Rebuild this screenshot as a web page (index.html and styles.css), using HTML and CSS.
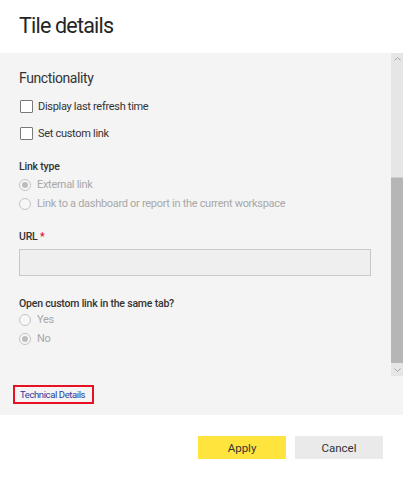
FILE: index.html
```html
<!DOCTYPE html>
<html>
<head>
<meta charset="utf-8">
<link rel="stylesheet" href="styles.css">
</head>
<body>
<div class="dialog">
  <header class="head"><h1 class="title">Tile details</h1></header>
  <section class="panel">
    <div class="scrollrow">
      <div class="content">
        <h2 class="section">Functionality</h2>
        <label class="check"><span class="box"></span>Display last refresh time</label>
        <label class="check check2"><span class="box"></span>Set custom link</label>
        <div class="label lt">Link type</div>
        <div class="radio dis"><span class="circ on"></span>External link</div>
        <div class="radio dis"><span class="circ"></span>Link to a dashboard or report in the current workspace</div>
        <div class="label url">URL <span class="req">*</span></div>
        <div class="input"></div>
        <div class="label otab">Open custom link in the same tab?</div>
        <div class="radio dis"><span class="circ"></span>Yes</div>
        <div class="radio dis"><span class="circ on"></span>No</div>
      </div>
      <div class="scrollbar">
        <div class="arrow up"><svg width="7" height="4" viewBox="0 0 7 4"><path d="M0.5 3.5 L3.5 0.5 L6.5 3.5" fill="none" stroke="#a8a8a8" stroke-width="1"/></svg></div>
        <div class="track"><div class="thumb"></div></div>
        <div class="arrow down"><svg width="7" height="4" viewBox="0 0 7 4"><path d="M0.5 0.5 L3.5 3.5 L6.5 0.5" fill="none" stroke="#a8a8a8" stroke-width="1"/></svg></div>
      </div>
    </div>
    <div class="techrow"><a class="tech">Technical Details</a></div>
  </section>
  <footer class="foot">
    <button class="btn apply">Apply</button>
    <button class="btn cancel">Cancel</button>
  </footer>
</div>
</body>
</html>
```
FILE: styles.css
```css
* { box-sizing: border-box; }
html, body { margin: 0; padding: 0; background: #fff; }
body { font-family: Roboto, "Open Sans", sans-serif; color: #333; width: 403px; height: 485px; overflow: hidden; }
.dialog { display: flex; flex-direction: column; height: 485px; }
.head { height: 53px; padding-left: 19px; }
.title { margin: 0; padding-top: 11px; font-size: 21.5px; font-weight: 400; line-height: 30px; color: #252525; letter-spacing: -0.8px; }
.panel { background: #f4f4f4; height: 362px; display: flex; flex-direction: column; }
.scrollrow { display: flex; height: 323px; }
.content { flex: 1; padding-left: 19px; padding-top: 15px; }
.section { margin: 0; font-size: 14px; font-weight: 400; line-height: 20px; color: #333; letter-spacing: -0.4px; }
.check { display: flex; align-items: center; height: 20px; margin-top: 8px; font-size: 11px; color: #333; letter-spacing: -0.3px; }
.check2 { margin-top: 7px; }
.box { width: 13px; height: 13px; border: 1px solid #7a7a7a; background: #fff; margin-left: 1px; margin-right: 5px; border-radius: 1px; }
.label { font-size: 10.5px; font-weight: 500; line-height: 16px; color: #333; letter-spacing: -0.2px; }
.lt { margin-top: 16px; }
.radio { display: flex; align-items: center; height: 19px; font-size: 11px; letter-spacing: -0.3px; }
.dis { color: #a8a8a8; }
.circ { width: 12px; height: 12px; border: 1px solid #c4c4c4; border-radius: 50%; margin-right: 6px; display: flex; align-items: center; justify-content: center; background: #f7f7f7; }
.circ.on::after { content: ""; width: 6px; height: 6px; border-radius: 50%; background: #bdbdbd; }
.url { margin-top: 16px; }
.req { color: #e81123; }
.input { width: 352px; height: 27px; margin-top: 4px; border: 1px solid #c8c8c8; background: #efefef; }
.otab { margin-top: 20px; margin-bottom: -2px; }
.scrollbar { width: 12px; display: flex; flex-direction: column; background: #e6e6e6; }
.arrow { height: 12px; display: flex; align-items: center; justify-content: center; }
.track { flex: 1; position: relative; }
.thumb { position: absolute; left: 0; right: 0; top: 112px; height: 186px; background: #b6b6b6; border-top: 1px solid #cfcfcf; }
.techrow { padding: 7px 0 0 13px; }
.tech { display: inline-block; white-space: nowrap; height: 19px; width: 81px; border: 2px solid #e81123; font-size: 9.5px; line-height: 15px; padding-left: 5px; color: #2b3b9c; letter-spacing: -0.4px; }
.foot { flex: 1; display: flex; justify-content: flex-end; align-items: flex-start; padding-top: 21px; padding-right: 20px; gap: 9px; }
.btn { width: 88px; height: 23px; border: none; font-family: inherit; font-size: 11.5px; color: #333; padding: 0; }
.apply { background: #fee43c; }
.cancel { background: #eaeaea; }
```
